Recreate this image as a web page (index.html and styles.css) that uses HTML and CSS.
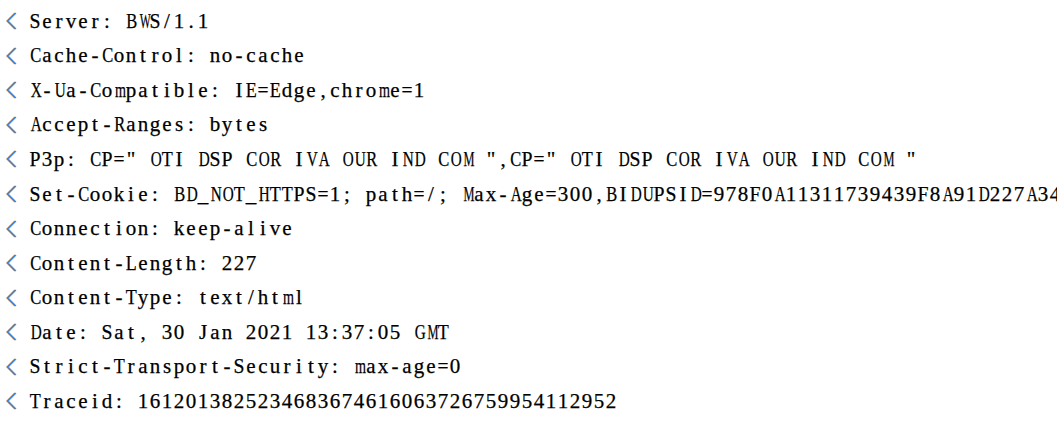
FILE: index.html
```html
<!DOCTYPE html>
<html>
<head>
<meta charset="utf-8">
<link rel="stylesheet" href="styles.css">
</head>
<body>
<div class="log">
  <div class="row"><svg class="chev" viewBox="0 0 10 16"><polyline class="c1" points="8.5,0.5 1,8 8.5,15.5"/><polyline class="c2" points="9.5,0.5 2,8 9.5,15.5"/></svg><span class="txt">Server: BWS/1.1</span></div>
  <div class="row"><svg class="chev" viewBox="0 0 10 16"><polyline class="c1" points="8.5,0.5 1,8 8.5,15.5"/><polyline class="c2" points="9.5,0.5 2,8 9.5,15.5"/></svg><span class="txt">Cache-Control: no-cache</span></div>
  <div class="row"><svg class="chev" viewBox="0 0 10 16"><polyline class="c1" points="8.5,0.5 1,8 8.5,15.5"/><polyline class="c2" points="9.5,0.5 2,8 9.5,15.5"/></svg><span class="txt">X-Ua-Compatible: IE=Edge,chrome=1</span></div>
  <div class="row"><svg class="chev" viewBox="0 0 10 16"><polyline class="c1" points="8.5,0.5 1,8 8.5,15.5"/><polyline class="c2" points="9.5,0.5 2,8 9.5,15.5"/></svg><span class="txt">Accept-Ranges: bytes</span></div>
  <div class="row"><svg class="chev" viewBox="0 0 10 16"><polyline class="c1" points="8.5,0.5 1,8 8.5,15.5"/><polyline class="c2" points="9.5,0.5 2,8 9.5,15.5"/></svg><span class="txt">P3p: CP=" OTI DSP COR IVA OUR IND COM ",CP=" OTI DSP COR IVA OUR IND COM "</span></div>
  <div class="row"><svg class="chev" viewBox="0 0 10 16"><polyline class="c1" points="8.5,0.5 1,8 8.5,15.5"/><polyline class="c2" points="9.5,0.5 2,8 9.5,15.5"/></svg><span class="txt">Set-Cookie: BD_NOT_HTTPS=1; path=/; Max-Age=300,BIDUPSID=978F0A11311739439F8A91D227A34</span></div>
  <div class="row"><svg class="chev" viewBox="0 0 10 16"><polyline class="c1" points="8.5,0.5 1,8 8.5,15.5"/><polyline class="c2" points="9.5,0.5 2,8 9.5,15.5"/></svg><span class="txt">Connection: keep-alive</span></div>
  <div class="row"><svg class="chev" viewBox="0 0 10 16"><polyline class="c1" points="8.5,0.5 1,8 8.5,15.5"/><polyline class="c2" points="9.5,0.5 2,8 9.5,15.5"/></svg><span class="txt">Content-Length: 227</span></div>
  <div class="row"><svg class="chev" viewBox="0 0 10 16"><polyline class="c1" points="8.5,0.5 1,8 8.5,15.5"/><polyline class="c2" points="9.5,0.5 2,8 9.5,15.5"/></svg><span class="txt">Content-Type: text/html</span></div>
  <div class="row"><svg class="chev" viewBox="0 0 10 16"><polyline class="c1" points="8.5,0.5 1,8 8.5,15.5"/><polyline class="c2" points="9.5,0.5 2,8 9.5,15.5"/></svg><span class="txt">Date: Sat, 30 Jan 2021 13:37:05 GMT</span></div>
  <div class="row"><svg class="chev" viewBox="0 0 10 16"><polyline class="c1" points="8.5,0.5 1,8 8.5,15.5"/><polyline class="c2" points="9.5,0.5 2,8 9.5,15.5"/></svg><span class="txt">Strict-Transport-Security: max-age=0</span></div>
  <div class="row"><svg class="chev" viewBox="0 0 10 16"><polyline class="c1" points="8.5,0.5 1,8 8.5,15.5"/><polyline class="c2" points="9.5,0.5 2,8 9.5,15.5"/></svg><span class="txt">Traceid: 1612013825234683674616063726759954112952</span></div>
</div>
<script src="script.js"></script>
</body>
</html>
```

FILE: styles.css
```css
html, body {
  margin: 0;
  padding: 0;
  background: #ffffff;
  overflow: hidden;
}
.log {
  padding: 4px 0 0 6px;
  display: flex;
  flex-direction: column;
  width: 1051px;
  overflow: hidden;
}
.row {
  display: flex;
  align-items: center;
  height: 34.55px;
  gap: 13px;
  white-space: pre;
}
.chev {
  width: 10px;
  height: 16px;
  flex: none;
  overflow: visible;
}
.chev polyline {
  fill: none;
  stroke-width: 1.3;
  stroke-linecap: square;
}
.chev .c1 { stroke: #a86a30; }
.chev .c2 { stroke: #3d8be8; }
.txt {
  font-family: "Liberation Serif", "Times New Roman", serif;
  font-size: 21px;
  color: #000000;
  line-height: 1;
  -webkit-text-stroke: 0.25px #000000;
}
.ch {
  display: inline-block;
  white-space: pre;
}
.ch.fit {
  width: 12px;
  text-align: center;
}
```

FILE: script.js
```js
var spans = [];
document.querySelectorAll('.txt').forEach(function (el) {
  var text = el.textContent;
  el.textContent = '';
  for (var i = 0; i < text.length; i++) {
    var s = document.createElement('span');
    s.className = 'ch';
    s.textContent = text[i];
    el.appendChild(s);
    spans.push(s);
  }
});
var widths = spans.map(function (s) { return s.getBoundingClientRect().width; });
spans.forEach(function (s, i) {
  var w = widths[i];
  s.classList.add('fit');
  if (w > 11) {
    s.style.transform = 'scaleX(' + (11 / w).toFixed(3) + ')';
  }
});
```
